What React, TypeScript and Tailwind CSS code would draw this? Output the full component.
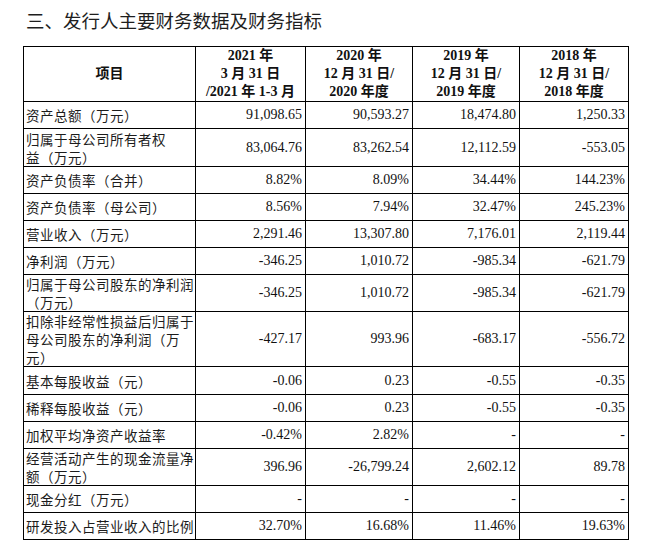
import React from "react";

type Row = { label: React.ReactNode; vals: string[]; h: number };

const rows: Row[] = [
  { label: "资产总额（万元）", vals: ["91,098.65", "90,593.27", "18,474.80", "1,250.33"], h: 27 },
  { label: <>归属于母公司所有者权<br />益（万元）</>, vals: ["83,064.76", "83,262.54", "12,112.59", "-553.05"], h: 38 },
  { label: "资产负债率（合并）", vals: ["8.82%", "8.09%", "34.44%", "144.23%"], h: 27 },
  { label: "资产负债率（母公司）", vals: ["8.56%", "7.94%", "32.47%", "245.23%"], h: 27 },
  { label: "营业收入（万元）", vals: ["2,291.46", "13,307.80", "7,176.01", "2,119.44"], h: 27 },
  { label: "净利润（万元）", vals: ["-346.25", "1,010.72", "-985.34", "-621.79"], h: 27 },
  { label: <>归属于母公司股东的净利润<br />（万元）</>, vals: ["-346.25", "1,010.72", "-985.34", "-621.79"], h: 37 },
  { label: <>扣除非经常性损益后归属于<br />母公司股东的净利润（万<br />元）</>, vals: ["-427.17", "993.96", "-683.17", "-556.72"], h: 55 },
  { label: "基本每股收益（元）", vals: ["-0.06", "0.23", "-0.55", "-0.35"], h: 28 },
  { label: "稀释每股收益（元）", vals: ["-0.06", "0.23", "-0.55", "-0.35"], h: 27 },
  { label: "加权平均净资产收益率", vals: ["-0.42%", "2.82%", "-", "-"], h: 27 },
  { label: <>经营活动产生的现金流量净<br />额（万元）</>, vals: ["396.96", "-26,799.24", "2,602.12", "89.78"], h: 37 },
  { label: "现金分红（万元）", vals: ["-", "-", "-", "-"], h: 27 },
  { label: "研发投入占营业收入的比例", vals: ["32.70%", "16.68%", "11.46%", "19.63%"], h: 27 },
];

const headers: React.ReactNode[] = [
  <>2021 年<br />3 月 31 日<br />/2021 年 1-3 月</>,
  <>2020 年<br />12 月 31 日/<br />2020 年度</>,
  <>2019 年<br />12 月 31 日/<br />2019 年度</>,
  <>2018 年<br />12 月 31 日/<br />2018 年度</>,
];

export default function App() {
  return (
    <div className="w-[649px] h-[548px] bg-white overflow-hidden" style={{ fontFamily: '"Liberation Serif", "Noto Sans CJK SC", serif' }}>
      <div className="pl-[26px] pt-[8px] h-[46px] text-[18.5px] leading-[24px] text-[#1e1e1e]" style={{ fontFamily: '"Noto Sans CJK SC", sans-serif' }}>
        三、发行人主要财务数据及财务指标
      </div>
      <table className="ml-[23px] table-fixed border-collapse text-[14px] leading-[18px] text-[#111]">
        <colgroup>
          <col className="w-[172px]" />
          <col className="w-[110px]" />
          <col className="w-[107px]" />
          <col className="w-[107px]" />
          <col className="w-[109px]" />
        </colgroup>
        <thead>
          <tr className="h-[55px]">
            <th className="border border-black p-0 text-center align-middle font-bold" style={{ fontFamily: '"Liberation Serif", "Noto Sans CJK SC", serif' }}>项目</th>
            {headers.map((h, i) => (
              <th key={i} className="border border-black p-0 text-center align-middle font-bold">{h}</th>
            ))}
          </tr>
        </thead>
        <tbody>
          {rows.map((r, i) => (
            <tr key={i} style={{ height: r.h }}>
              <td className="border border-black py-0 pl-[2px] pr-0 align-middle text-[#1c1c1c]" style={{ fontFamily: '"Noto Sans CJK SC", sans-serif', fontSize: 13.5, letterSpacing: 0.5 }}>
                {r.label}
              </td>
              {r.vals.map((v, j) => (
                <td key={j} className="border border-black py-0 pl-0 pr-[3px] text-right align-middle">{v}</td>
              ))}
            </tr>
          ))}
        </tbody>
      </table>
    </div>
  );
}
